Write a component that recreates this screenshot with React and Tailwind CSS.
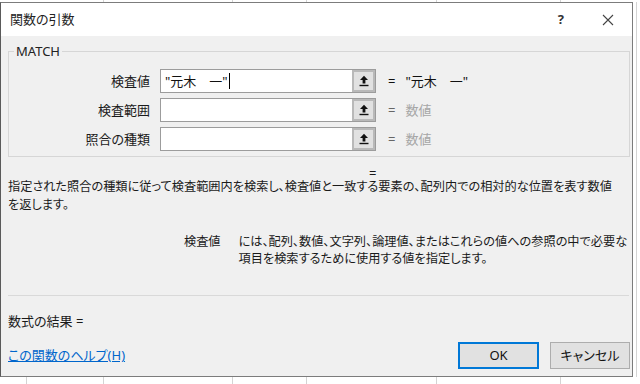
import React from "react";

const FONT = "font-['Noto_Sans','Noto_Sans_CJK_JP',sans-serif] [font-feature-settings:'palt']";

function Strip({ h, first }) {
  const widths = first ? [27, 77, 129, 74, 130, 124] : [104, 129, 74, 130, 124];
  return (
    <div className={`flex ${h} bg-white`}>
      {widths.map((w, i) => (
        <div key={i} className="h-full border-r border-[#d4d4d4]" style={{ width: w }} />
      ))}
      <div className="flex-1" />
    </div>
  );
}

function RefIcon() {
  return (
    <svg width="10" height="12" viewBox="0 0 10 12">
      <path d="M5 0.8 L1 5 H3.6 V8.4 H6.4 V5 H9 Z" fill="#111" />
      <rect x="0.5" y="9.8" width="9" height="1.4" fill="#111" />
    </svg>
  );
}

function ArgRow({ label, value, result, gray, cursor }) {
  return (
    <div className="flex items-center h-[24px]">
      <div className="w-[136px] text-right whitespace-nowrap">{label}</div>
      <div className="ml-[10px] w-[216px] h-[24px] border border-[#9c9c9c] bg-white flex">
        <div className="flex-1 flex items-center pl-[4px] text-[#111] whitespace-nowrap">
          {value}
          {cursor && <span className="inline-block w-[1px] h-[16px] bg-black ml-[1px]" />}
        </div>
        <div className="w-[23px] h-full bg-[#e1e1e1] border-2 border-[#b9b9b9] flex items-center justify-center">
          <RefIcon />
        </div>
      </div>
      <div className={`ml-[12px] ${gray ? "text-[#666]" : "text-[#111]"}`}>=</div>
      <div className={`ml-[10px] whitespace-nowrap ${gray ? "text-[#a6a6a6]" : "text-[#111]"}`}>{result}</div>
    </div>
  );
}

export default function App() {
  return (
    <div className={`w-[640px] h-[384px] bg-white overflow-hidden flex flex-col text-[13px] leading-[17px] text-[#1a1a1a] ${FONT}`}>
      <Strip h="h-[2px]" />
      <div className="flex h-[375px]">
        <div className="w-[633px] h-full border border-[#7c7c7c] border-l-[#5a5a5a] flex flex-col bg-[#f0f0f0]">
          {/* title bar */}
          <div className="h-[33px] bg-white flex items-center pl-[9px] pr-[14px] shrink-0">
            <div className="text-[13px] text-[#222]">関数の引数</div>
            <div className="flex-1" />
            <div className="text-[13px] font-bold text-[#333] mr-[38px]">?</div>
            <svg width="12" height="12" viewBox="0 0 12 12" className="mr-[4px]">
              <path d="M1 1 L11 11 M11 1 L1 11" stroke="#444" strokeWidth="1.1" />
            </svg>
          </div>
          {/* body */}
          <div className="flex-1 flex flex-col pl-[7px] pr-[2px]">
            <fieldset className="mt-[6px] border border-[#d6d6d6] px-[5px] pb-[5px]">
              <legend className="px-[2px] text-[13px] leading-[18px] text-[#222]">MATCH</legend>
              <div className="flex flex-col gap-[5px] pt-[9px]">
                <ArgRow label="検査値" value={'"元木　一"'} result={'"元木　一"'} cursor />
                <ArgRow label="検査範囲" value="" result="数値" gray />
                <ArgRow label="照合の種類" value="" result="数値" gray />
              </div>
            </fieldset>
            <div className="mt-[11px] h-[10px] leading-[10px] pl-[361px]">=</div>
            <div className="leading-[18px] text-[12.2px] whitespace-nowrap">
              指定された照合の種類に従って検査範囲内を検索し、検査値と一致する要素の、配列内での相対的な位置を表す数値
              <br />
              を返します。
            </div>
            <div className="mt-[19px] flex leading-[17px] text-[12.2px] whitespace-nowrap">
              <div className="ml-[176px] shrink-0">検査値</div>
              <div className="ml-[18px]">
                には、配列、数値、文字列、論理値、またはこれらの値への参照の中で必要な
                <br />
                項目を検索するために使用する値を指定します。
              </div>
            </div>
            <div className="mt-[28px] border-t border-[#d9d9d9] mr-[1px]" />
            <div className="mt-[17px] leading-[17px]">数式の結果 =</div>
            <div className="mt-[12px] flex items-center">
              <a className="text-[#0066cc] underline text-[13px] leading-[17px]">この関数のヘルプ(H)</a>
              <div className="flex-1" />
              <button className="w-[81px] h-[27px] bg-[#e1e1e1] border-2 border-[#0078d7] text-[13px] text-[#111]">OK</button>
              <button className="ml-[11px] w-[80px] h-[27px] bg-[#e1e1e1] border border-[#adadad] text-[13px] text-[#111]">キャンセル</button>
            </div>
          </div>
        </div>
        <div className="flex-1 bg-white flex">
          <div className="w-[3px]" />
          <div className="h-full border-l border-[#d4d4d4]" />
        </div>
      </div>
      <Strip h="h-[7px]" first />
    </div>
  );
}
